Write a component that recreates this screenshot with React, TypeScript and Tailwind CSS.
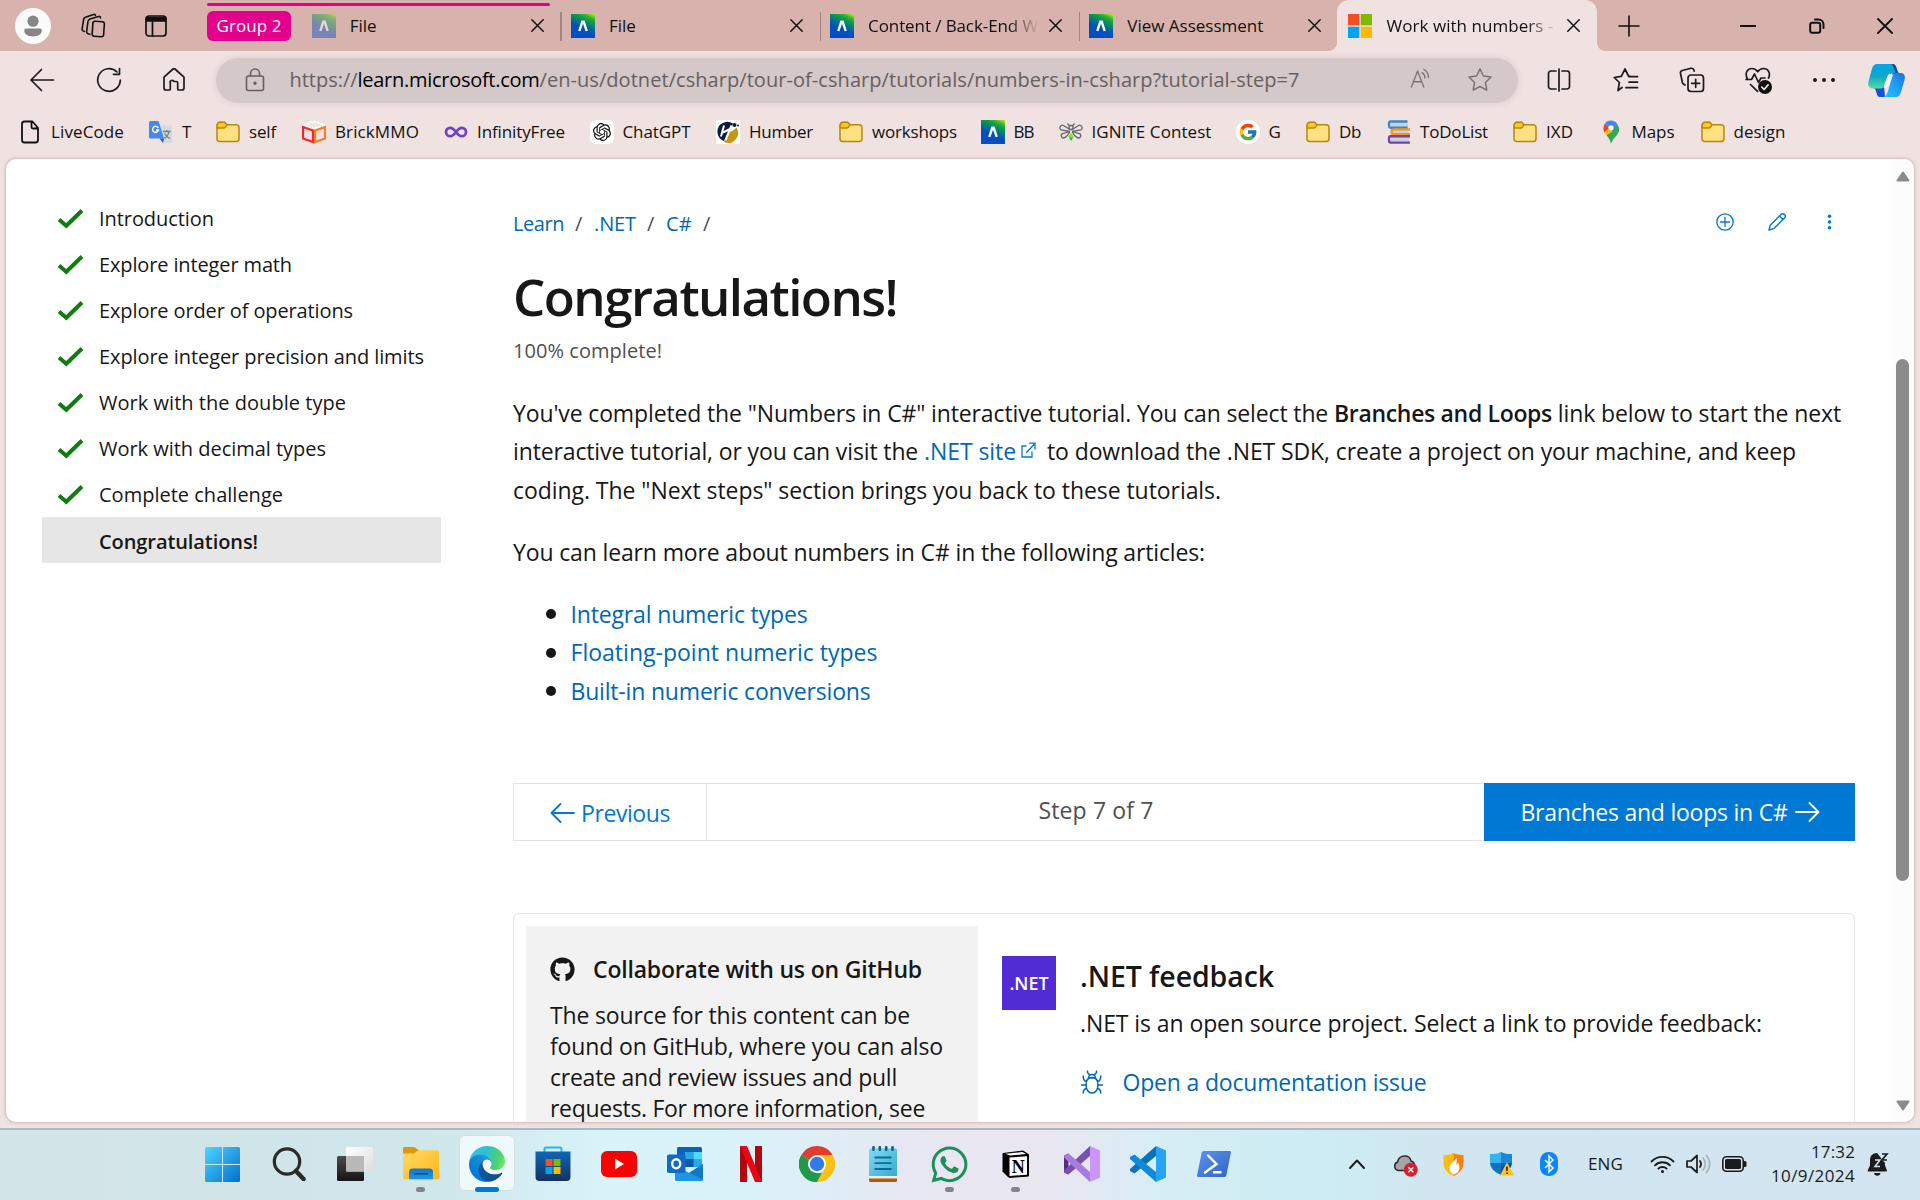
import React, { useLayoutEffect, useRef, useState } from "react";
import { FcGoogle } from "react-icons/fc";
import { FaGithub, FaWhatsapp } from "react-icons/fa";
import { SiOpenai } from "react-icons/si";

/* A run of text whose tracking is adjusted so that it spans `w` pixels. */
function T({ w, children, className = "" }: { w: number; children: string; className?: string }) {
  const ref = useRef<HTMLSpanElement>(null);
  const [ls, setLs] = useState(0);
  useLayoutEffect(() => {
    const el = ref.current;
    if (!el) return;
    el.style.letterSpacing = "0px";
    const natural = el.getBoundingClientRect().width;
    setLs((w - natural) / children.length);
    el.style.letterSpacing = `${(w - natural) / children.length}px`;
  }, [w, children]);
  return (
    <span ref={ref} className={`inline-block whitespace-pre ${className}`} style={{ letterSpacing: `${ls}px` }}>
      {children}
    </span>
  );
}

type SvgProps = { w: number; h?: number; vb?: string; className?: string; sw?: number; children: React.ReactNode };
/* Outline icon */
function Line({ w, h = w, vb, className = "", sw = 1.6, children }: SvgProps) {
  return (
    <svg width={w} height={h} viewBox={vb ?? `0 0 ${w} ${h}`} fill="none" stroke="currentColor" strokeWidth={sw} strokeLinecap="round" strokeLinejoin="round" className={`block shrink-0 ${className}`}>
      {children}
    </svg>
  );
}
/* Filled icon */
function Fill({ w, h = w, vb, className = "", children }: SvgProps) {
  return (
    <svg width={w} height={h} viewBox={vb ?? `0 0 ${w} ${h}`} className={`block shrink-0 ${className}`}>
      {children}
    </svg>
  );
}

function Close({ s = 13 }: { s?: number }) {
  return (
    <Line w={s} vb="0 0 13 13" sw={1.5}>
      <path d="M.8.8l11.4 11.4M12.2.8L.8 12.2" />
    </Line>
  );
}

function BrightspaceIcon({ faded = false }: { faded?: boolean }) {
  return (
    <div className={`flex h-6 w-6 shrink-0 items-center justify-center bg-[linear-gradient(25deg,#0050c0_42%,#0b9a4a_72%,#2fb338_84%,#d8ee10_100%)] ${faded ? "opacity-45" : ""}`}>
      <svg width="12" height="12" viewBox="0 0 12 12" fill="none" stroke="#fff" strokeWidth="2.4">
        <path d="M2.300 11L5.300 1.800h1.400l3 9.200" />
      </svg>
    </div>
  );
}

function MsLogo({ s }: { s: number }) {
  return (
    <Fill w={s} vb="0 0 24 24">
      <path fill="#f25022" d="M0 0h11.3v11.3H0z" />
      <path fill="#7fba00" d="M12.7 0H24v11.3H12.7z" />
      <path fill="#00a4ef" d="M0 12.7h11.3V24H0z" />
      <path fill="#ffb900" d="M12.7 12.7H24V24H12.7z" />
    </Fill>
  );
}

function Tab({ label, w, active = false, faded = false, fade = false, sep = false }: { label: string; w: number; active?: boolean; faded?: boolean; fade?: boolean; sep?: boolean }) {
  return (
    <div className={`relative flex h-full w-[259.2px] shrink-0 items-center pl-[11px] ${active ? "rounded-t-[12px] bg-[#f0e2e1]" : ""}`}>
      {active ? <MsLogo s={24} /> : <BrightspaceIcon faded={faded} />}
      <div className={`ml-[14px] w-[171px] overflow-hidden ${fade ? "[mask-image:linear-gradient(to_right,#000_82%,transparent_100%)]" : ""}`}>
        <T w={w}>{label}</T>
      </div>
      <div className="ml-[10px]">
        <Close />
      </div>
      {sep && <div className="absolute top-[12px] right-[-2px] h-[29px] w-[1.5px] bg-[#a08581]" />}
      {active && (
        <>
          <div className="absolute bottom-0 -left-2 h-2 w-2 bg-[radial-gradient(circle_at_0_0,transparent_7.5px,#f0e2e1_8px)]" />
          <div className="absolute -right-2 bottom-0 h-2 w-2 bg-[radial-gradient(circle_at_100%_0,transparent_7.5px,#f0e2e1_8px)]" />
        </>
      )}
    </div>
  );
}

function TabStrip() {
  return (
    <div className="relative flex h-[51px] items-center bg-[#d8b2ac] text-[17px] text-[#111]">
      <div className="ml-[15px] w-9">
        <Fill w={36}>
          <circle cx="18" cy="18" r="18" fill="#fafafa" />
          <circle cx="18" cy="13.2" r="5.6" fill="#868686" />
          <path d="M11.2 20.6h13.6a2 2 0 0 1 2 2.2c-.4 4-3.8 5.7-8.8 5.7s-8.4-1.700-8.800-5.700a2 2 0 0 1 2-2.200z" fill="#868686" />
        </Fill>
      </div>
      <div className="ml-[29px] w-[26px]">
        <Line w={26} h={26} sw={1.6}>
          <rect x="12.500" y="8.500" width="11.500" height="15" rx="2.200" transform="rotate(4 18 16)" />
          <path d="M9.800 21.300l-1.800-.5A2 2 0 0 1 6.600 18.700L8 8.300a3 3 0 0 1 2-2.400l8.500-2.400a1.500 1.500 0 0 1 2 1.500" />
          <path d="M4.300 18.500l-1.200-.6a2 2 0 0 1-1-2.100L3.600 6.600a3 3 0 0 1 1.900-2.300L13.500 1.500a1.500 1.500 0 0 1 1.900.8" />
        </Line>
      </div>
      <div className="ml-[39px]">
        <Line w={22} h={22} sw={1.7}>
          <rect x="1" y="1" width="20" height="20" rx="3" />
          <path d="M1.500 2.500h19V6h-19z" fill="currentColor" />
          <path d="M7.500 7v14" />
        </Line>
      </div>
      <div className="ml-[40px] flex h-[30px] w-[84px] items-center justify-center rounded-[6px] bg-[#e3008c] text-white">
        <T w={65}>Group 2</T>
      </div>
      <div className="ml-[9.700px] flex h-full">
        <Tab label="File" w={27} faded sep />
        <Tab label="File" w={27} sep />
        <Tab label="Content / Back-End W" w={170} fade sep />
        <Tab label="View Assessment" w={136} />
        <Tab label="Work with numbers -" w={167} active fade />
      </div>
      <div className="ml-[21px] flex-1">
        <Line w={22}>
          <path d="M11 1v20M1 11h20" />
        </Line>
      </div>
      <div className="flex items-center">
        <div className="flex w-[70px] justify-center">
          <Line w={16} sw={2}><path d="M.8 8h14.400" /></Line>
        </div>
        <div className="flex w-[68px] justify-center">
          <Line w={16} sw={2}>
            <rect x="1.200" y="4.800" width="10" height="10" rx="2" />
            <path d="M6 1.500h3.500a5 5 0 0 1 5 5V10" />
          </Line>
        </div>
        <div className="mr-[2px] flex w-[67px] justify-center"><Close s={16} /></div>
      </div>
      <div className="absolute top-[3px] left-[207px] h-[3px] w-[343px] rounded-full bg-[#e3008c]" />
    </div>
  );
}

const starPath = "M12 1.800l3.100 6.500 7.100 1-5.200 5 1.300 7.100L12 18l-6.300 3.400L7 14.300l-5.200-5 7.100-1z";

function Toolbar() {
  return (
    <div className="flex h-[58px] items-center pl-[9px] text-[#1b1b1b]">
      <div className="flex">
        <div className="flex w-[66px] justify-center"><Line w={26} sw={1.700}><path d="M24.500 13H2M12.500 2.500L2 13l10.500 10.500" /></Line></div>
        <div className="flex w-[67px] justify-center"><Line w={26} sw={1.700}><path d="M24.300 13A11.300 11.300 0 1 1 21 5M23.500 1.500v5.800h-6" /></Line></div>
        <div className="flex w-[64px] justify-center"><Line w={24} sw={1.700}><path d="M2 10.200L11 2a1.500 1.500 0 0 1 2 0l9 8.200V21a2 2 0 0 1-2 2h-3.300a1 1 0 0 1-1-1v-6a1.500 1.500 0 0 0-1.500-1.500h-2.400A1.500 1.500 0 0 0 8.300 16v6a1 1 0 0 1-1 1H4a2 2 0 0 1-2-2z" /></Line></div>
      </div>
      <div className="ml-[10px] flex h-[45px] w-[1302px] items-center rounded-full bg-[#d5c8c8] pl-[29px] text-[20px] text-[#666060] shadow-[0_0_7px_rgba(80,40,40,0.12)]">
        <Line w={20} h={24} sw={1.600}>
          <rect x="1.500" y="8" width="17" height="14.500" rx="2" />
          <path d="M5.500 8V5.500a4.500 4.500 0 0 1 9 0V8" />
          <circle cx="10" cy="15.300" r=".9" fill="currentColor" />
        </Line>
        <div className="ml-[24.500px] flex flex-1 pb-px">
          <T w={68}>https://</T>
          <T w={182} className="text-black">learn.microsoft.com</T>
          <T w={760}>/en-us/dotnet/csharp/tour-of-csharp/tutorials/numbers-in-csharp?tutorial-step=7</T>
        </div>
        <div className="flex items-center gap-[34px] pr-[25px] text-[#7b7474]">
          <Line w={25} h={24} className="pb-1">
            <path d="M1.500 23L9 3.500 16.500 23M4.200 16.500h9.600M14.500 5.500a7.500 7.500 0 0 1 3.300 6.500M16.500 1.500a11.500 11.500 0 0 1 5.500 10" />
          </Line>
          <Line w={26} vb="0 0 24 24" sw={1.400}><path d={starPath} /></Line>
        </div>
      </div>
      <div className="ml-[8px] flex items-center">
        <div className="flex w-[66px] justify-center">
          <Line w={24} sw={1.700}><path d="M9 3H4a2.500 2.500 0 0 0-2.500 2.500v13A2.500 2.500 0 0 0 4 21h5M15 3h5a2.500 2.500 0 0 1 2.500 2.500v13A2.500 2.500 0 0 1 20 21h-5M12 1v22" /></Line>
        </div>
        <div className="flex w-[67px] justify-center">
          <Line w={26} sw={1.700}><path d="M9 20.500l-4 3 1.400-8-5.200-5 7.100-1.200L12 2l3.500 7 3 .5M16 9.700h8.500M16 15.200h8.500M13 20.700h11.500" /></Line>
        </div>
        <div className="flex w-[66px] justify-center">
          <Line w={26} sw={1.700}>
            <rect x="9" y="8" width="15.500" height="16.500" rx="3" />
            <path d="M16.700 12.300v8M12.700 16.300h8M6 18l-1.500-1a3 3 0 0 1-1.200-1.900L1.500 6.500A2.500 2.500 0 0 1 3.300 3.500L12 1.300a2.500 2.500 0 0 1 3 1.900l.2 1" />
          </Line>
        </div>
        <div className="flex w-[67px] justify-center">
          <Line w={28} h={27} sw={1.700}>
            <path d="M2.500 12C-1 5.500 3 1.500 7 1.500c3 0 4.800 1.800 5.700 3.200 1-1.400 2.800-3.200 5.800-3.200 4.500 0 7.500 4.500 5 9.500M1 12.500h5.500L9.500 7l4 8.500 2.500-4.500h4M5.500 17.500l7 6.800" />
            <circle cx="20" cy="20" r="7" fill="#111" stroke="none" />
            <path d="M16.800 20.200l2.300 2.300 4-4.600" stroke="#f0e2e1" />
          </Line>
        </div>
        <div className="flex w-[64px] justify-center gap-[5px]">
          <i className="size-[4px] rounded-full bg-[#1b1b1b]" />
          <i className="size-[4px] rounded-full bg-[#1b1b1b]" />
          <i className="size-[4px] rounded-full bg-[#1b1b1b]" />
        </div>
        <div className="flex w-[61px] justify-center">
          <Fill w={37} h={33} vb="0 0 37 33">
            <defs>
              <linearGradient id="cpA" x1="0" y1="0" x2="0" y2="1"><stop offset="0" stopColor="#05a5ea" /><stop offset=".5" stopColor="#0fa7c8" /><stop offset="1" stopColor="#55dd9a" /></linearGradient>
              <linearGradient id="cpB" x1="1" y1="0" x2="0" y2="1"><stop offset="0" stopColor="#1f6fd8" /><stop offset=".5" stopColor="#1ba2f5" /><stop offset="1" stopColor="#1fc5ff" /></linearGradient>
            </defs>
            <path d="M20 0h5c4 0 3.500 7 6 9.500L22 11z" fill="#0a4aa8" />
            <path d="M17 33h-5c-4 0-3-7-6-9l10-2z" fill="#1652d6" />
            <path d="M9 0h13c2.500 0 3.300 2 4 4.500L27.500 9H24c-3 0-4 1.500-5 4.500l-3 8.500c-.6 2-2 2.500-4 2.500H5c-4 0-5.500-3-4.500-7l3.500-13C5 1.500 6.500 0 9 0z" fill="url(#cpA)" />
            <path d="M28 33H15c3 0 4-3 5-6l4-13c1-3.500 2-5 5-5h3.500c4 0 5 3 4 7L33 28c-1 3.500-2.500 5-5 5z" fill="url(#cpB)" />
            <path d="M24 9.500c-3 0-4 1.500-5 4.500l-3.500 10h1.500c2 0 3-1 3.500-3l3-9c.4-1.300 1-2.500 2.500-2.500z" fill="#f4fbff" />
          </Fill>
        </div>
      </div>
    </div>
  );
}

function Folder() {
  return (
    <Fill w={24} h={22}>
      <path d="M1 5.500C1 2.500 2 1.200 4 1.200h4.500l2.500 2.600h9.300A2.700 2.700 0 0 1 23 6.500v11.300a2.700 2.700 0 0 1-2.700 2.700H3.700A2.700 2.700 0 0 1 1 17.800z" fill="#ffe082" stroke="#b8860b" strokeWidth="1.500" />
      <path d="M1.200 6V4.500A3 3 0 0 1 4 1.300h4.500L11 3.900 9.500 6c-.5.700-1 1-2 1H1.300z" fill="#ffc720" stroke="#b8860b" strokeWidth="1.300" />
    </Fill>
  );
}

const bookmarkIcons: Record<string, React.ReactNode> = {
  page: (
    <Line w={24} sw={1.800}>
      <path d="M6 1.500h8.500L20 8v12a2.500 2.500 0 0 1-2.500 2.500h-11A2.500 2.500 0 0 1 4 20V4a2.500 2.500 0 0 1 2-2.500zM13.500 2v5A1.500 1.500 0 0 0 15 8.500h5" />
    </Line>
  ),
  translate: (
    <Fill w={24}>
      <path d="M9 5.500h12.500A1.500 1.500 0 0 1 23 7v14.500a1.500 1.500 0 0 1-1.500 1.500H14z" fill="#d3dbdc" />
      <path d="M1.500 1h8L15 18.500H1.500A1.500 1.500 0 0 1 0 17V2.500A1.500 1.500 0 0 1 1.500 1z" fill="#4688f1" />
      <path d="M10.500 18.500H15L14 23z" fill="#2f55ad" />
      <path d="M9.300 8A3 3 0 1 0 9.500 10H7" fill="none" stroke="#fff" strokeWidth="1.400" />
      <path d="M14 11.500h7.500M17.700 10v1.500M20 11.500c-.5 3-2.500 5.500-5 7M15.500 13.500c1 2 3 4 5.500 5" fill="none" stroke="#6b7f86" strokeWidth="1.300" />
    </Fill>
  ),
  folder: <Folder />,
  brick: (
    <Fill w={24}>
      <g fill="none" strokeWidth="2.200">
        <path d="M1 7l10 3.500V22L1 18.500z" stroke="#f5232f" />
        <path d="M23 7l-10 3.500V22l10-3.500z" stroke="#ff7a1a" />
        <path d="M2 5l10-3.500L22 5l-10 3.500z" stroke="#fff" strokeDasharray="2.500 1" strokeWidth="1.800" />
      </g>
    </Fill>
  ),
  infinity: (
    <Fill w={24}>
      <path d="M12 12C9.500 8.500 8 7.800 6.200 7.800a4.200 4.200 0 0 0 0 8.400C8 16.200 9.500 15.500 12 12s4-4.200 5.800-4.200a4.200 4.200 0 0 1 0 8.400c-1.800 0-3.300-.7-5.800-4.200z" fill="none" stroke="#7140c4" strokeWidth="2.700" />
    </Fill>
  ),
  gpt: (
    <div className="flex size-6 items-center justify-center rounded-[6px] bg-white"><SiOpenai size={18} color="#111" /></div>
  ),
  humber: (
    <Fill w={24}>
      <path fill="#fff" d="M0 0h24v24H0z" />
      <path d="M1.500 13A10 10 0 0 1 17 3.500L8 21A10 10 0 0 1 1.500 13z" fill="#0c1c3c" />
      <path d="M20.500 7.500a10 10 0 0 1-12.500 14.500L12.500 12l4-1z" fill="#c9950f" />
      <path d="M8 5.500L5 16.500M9.500 20L15.500 5.500M7 12.500l7-3.500" stroke="#fff" strokeWidth="2" />
      <circle cx="18.500" cy="5" r="2" fill="#0c1c3c" /><circle cx="22" cy="5.500" r="1" fill="#0c1c3c" />
    </Fill>
  ),
  bb: <BrightspaceIcon />,
  bee: (
    <Fill w={24}>
      <g fill="none" stroke="#63676b" strokeWidth="1.300">
        <path d="M11.500 10L4.500 5.500a2.500 2.500 0 0 0-2.500 4.300L11 11.500M12.500 10l7-4.500a2.500 2.500 0 0 1 2.500 4.300L13 11.500" />
        <path d="M10.500 11.500l-6.800 2.200a2.200 2.200 0 0 0 1.600 4.100c2-.8 4-3 5.500-6M13.500 11.500l6.800 2.200a2.200 2.200 0 0 1-1.600 4.100c-2-.8-4-3-5.500-6" />
        <circle cx="12" cy="7.500" r="2" />
        <path d="M10.500 6L8.500 3.500M13.500 6l2-2.500" />
      </g>
      <path d="M12 13l2.800 3.500L12 21l-2.800-4.500z" fill="#8ee02a" />
      <path d="M10 17.500h4L12 21z" fill="#25b97a" />
    </Fill>
  ),
  google: <div className="flex size-6 items-center justify-center rounded-full bg-white"><FcGoogle size={20} /></div>,
  books: (
    <Fill w={24}>
      <path fill="#c3d2dc" d="M4 2.500h17V8H4zM4 10h17v4.500H4zM4 17h18v5H4z" />
      <path d="M20.500 1.500H3.500c-2 0-2 6.200 0 6.200h17" fill="none" stroke="#3c86c8" strokeWidth="2.400" />
      <path d="M23 9.300H6.500c-2.500 0-2.500 4.800 0 4.800H23" fill="none" stroke="#ff9010" strokeWidth="2.300" />
      <path d="M23 16.300H3.500c-2 0-2 6.300 0 6.300H23" fill="none" stroke="#7540a8" strokeWidth="2.400" />
    </Fill>
  ),
  maps: (
    <Fill w={24}>
      <path d="M12 23.800c-1-4.300-2.500-6-4.500-8.600L18.500 4.800c3 4 1.500 7.700-.5 10-2 2.700-4.700 5-6 9z" fill="#34a853" />
      <path d="M5.200 11.500L10 6l3.500 5.500-6 3.700c-1.200-1.500-2-2.500-2.300-3.700z" fill="#fbbc04" />
      <path d="M6 3.500l4.500 4-5.300 5C4 9 4.200 6 6 3.500z" fill="#ea4335" />
      <path d="M6 3.500C8-.2 15.500-1.300 18.700 4.700L14 10l-5-4z" fill="#4285f4" />
      <circle cx="12" cy="7.800" r="2.600" fill="#fff" />
    </Fill>
  ),
};

const bookmarks: [string, string, number, number][] = [
  ["page", "LiveCode", 73, 131],
  ["translate", "T", 9, 67],
  ["folder", "self", 27, 86],
  ["brick", "BrickMMO", 84, 142],
  ["infinity", "InfinityFree", 88, 145.500],
  ["gpt", "ChatGPT", 68, 126.500],
  ["humber", "Humber", 64, 123],
  ["folder", "workshops", 85, 141.500],
  ["bb", "BB", 20, 78],
  ["bee", "IGNITE Contest", 120, 177],
  ["google", "G", 12, 70.500],
  ["folder", "Db", 22, 81],
  ["books", "ToDoList", 68, 126],
  ["folder", "IXD", 27, 85.500],
  ["maps", "Maps", 43, 102],
  ["folder", "design", 52, 90],
];

function Bookmarks() {
  return (
    <div className="flex h-[49px] pb-[4px] pl-[18px] text-[17px] text-[#111]">
      {bookmarks.map(([icon, label, w, cell]) => (
        <div key={label} className="flex shrink-0 items-center gap-[9px]" style={{ width: cell }}>
          <div className="w-6 shrink-0">{bookmarkIcons[icon]}</div>
          <T w={w}>{label}</T>
        </div>
      ))}
    </div>
  );
}

const steps: [string, number][] = [
  ["Introduction", 115],
  ["Explore integer math", 193],
  ["Explore order of operations", 254],
  ["Explore integer precision and limits", 325],
  ["Work with the double type", 247],
  ["Work with decimal types", 227],
  ["Complete challenge", 184],
];

function Steps() {
  return (
    <nav className="mt-[36px] ml-[36px] w-[399px] shrink-0 text-[20px] text-[#171717]">
      {steps.map(([label, w]) => (
        <div key={label} className="flex h-[46px] items-center pt-[2px] pl-[15px]">
          <Line w={27} h={20} sw={4} className="mr-[15px] text-[#107c10]">
            <path strokeLinecap="butt" strokeLinejoin="miter" d="M2 10.500l7.300 6.300L25 1.500" />
          </Line>
          <T w={w}>{label}</T>
        </div>
      ))}
      <div className="flex h-[46px] items-center bg-[#e6e6e6] pt-[3px] pl-[57px] font-semibold">
        <T w={159}>Congratulations!</T>
      </div>
    </nav>
  );
}

function Article() {
  return (
    <main className="ml-[72px] flex w-[1342px] shrink-0 flex-col pt-[50px] text-[23px] leading-[38.4px] text-[#171717]">
      <div className="flex h-[30px] shrink-0 justify-between">
        <div className="flex text-[20px] leading-[30px] text-[#505050]">
          <T w={51} className="text-[#0067b8]">Learn</T>
          <T w={8} className="mx-[11px]">/</T>
          <T w={42} className="text-[#0067b8]">.NET</T>
          <T w={8} className="mx-[11px]">/</T>
          <T w={26} className="text-[#0067b8]">C#</T>
          <T w={8} className="mx-[11px]">/</T>
        </div>
        <div className="mr-[16px] flex h-[26px] items-center gap-[34px] text-[#0078d4]">
          <Line w={18} sw={1.300}><circle cx="9" cy="9" r="8.200" /><path d="M9 4.500v9M4.500 9h9" /></Line>
          <Line w={18} sw={1.400}><path d="M1 17l1.200-4.800L13 1.500a2.400 2.400 0 0 1 3.500 3.400L5.700 15.700zM11.500 3l3.500 3.500" /></Line>
          <Fill w={5} h={16} className="mx-[7px]"><g fill="#0078d4"><circle cx="2.500" cy="2.200" r="1.800" /><circle cx="2.500" cy="8" r="1.800" /><circle cx="2.500" cy="13.800" r="1.800" /></g></Fill>
        </div>
      </div>
      <h1 className="mt-[25px] h-[64px] shrink-0 text-[51px] leading-[64px] font-semibold"><T w={384}>Congratulations!</T></h1>
      <div className="mt-[8px] h-[30px] shrink-0 text-[20px] leading-[30px] text-[#505050]"><T w={149}>100% complete!</T></div>
      <div className="mt-[28px] shrink-0">
        <div className="flex">
          <T w={821}>{'You\'ve completed the "Numbers in C#" interactive tutorial. You can select the '}</T>
          <T w={218} className="font-semibold">Branches and Loops</T>
          <T w={289}> link below to start the next</T>
        </div>
        <div className="flex">
          <T w={411}>interactive tutorial, or you can visit the </T>
          <T w={92} className="text-[#0067b8]">.NET site</T>
          <Line w={15} h={16} sw={1.300} className="mt-[10px] mr-[11px] ml-[5px] text-[#0078d4]">
            <path d="M5 4H1v11h10v-5M5.500 10.500L13.500 2M8.500 1.200H14V7" strokeLinejoin="miter" />
          </Line>
          <T w={749}>to download the .NET SDK, create a project on your machine, and keep</T>
        </div>
        <T w={708}>coding. The "Next steps" section brings you back to these tutorials.</T>
      </div>
      <div className="mt-[24px] h-[38.4px] shrink-0"><T w={692}>You can learn more about numbers in C# in the following articles:</T></div>
      <ul className="mt-[23px] h-[116px] shrink-0 leading-[38.7px] text-[#0067b8]">
        {([["Integral numeric types", 237], ["Floating-point numeric types", 307], ["Built-in numeric conversions", 300]] as [string, number][]).map(([t, w]) => (
          <li key={t} className="flex items-center pl-[32.500px]">
            <i className="mr-[15px] size-[10px] rounded-full bg-[#171717]" />
            <T w={w}>{t}</T>
          </li>
        ))}
      </ul>
      <div className="mt-[72px] flex h-[58px] shrink-0 items-stretch border border-r-0 border-[#e3e3e3]">
        <div className="flex w-[193px] border-r border-[#e3e3e3] pt-[10px] pl-[36px] text-[#0078d4]">
          <Line w={25} h={20} sw={1.800} className="mt-[9px] mr-[6px]"><path d="M24 10H1.500M10.500 1L1.500 10l9 9" /></Line>
          <T w={89}>Previous</T>
        </div>
        <div className="flex flex-1 justify-center pt-[7px] pl-px text-[#505050]"><T w={115}>Step 7 of 7</T></div>
        <div className="-my-px flex w-[371px] bg-[#0078d4] pt-[10px] pl-[36.500px] text-white">
          <T w={267}>Branches and loops in C#</T>
          <Line w={25} h={20} sw={1.800} className="mt-[9px] ml-[7px]"><path d="M1 10h22.500M14.500 1l9 9-9 9" /></Line>
        </div>
      </div>
      <div className="mt-[72px] flex h-[300px] shrink-0 rounded-[6px] border border-[#e3e3e3] pt-[12px] pl-[12px]">
        <div className="w-[452px] bg-[#f2f2f2] pt-[28px] pl-[24px] leading-[31.2px]">
          <div className="flex h-[32px] items-center font-semibold">
            <FaGithub size={25} className="mr-[18px]" />
            <T w={329}>Collaborate with us on GitHub</T>
          </div>
          <div className="mt-[14px]">
            <T w={360}>The source for this content can be</T>
            <T w={393}>found on GitHub, where you can also</T>
            <T w={347}>create and review issues and pull</T>
            <T w={375}>requests. For more information, see</T>
          </div>
        </div>
        <div className="mt-[30px] ml-[24px] flex size-[54px] items-center justify-center bg-[#512bd4] text-[18px] text-white">
          <T w={39} className="pt-[1px] font-semibold">.NET</T>
        </div>
        <div className="mt-[30px] ml-[24px]">
          <div className="h-[40px] text-[28.5px] leading-[40px] font-semibold"><T w={194}>.NET feedback</T></div>
          <div className="mt-[8px] h-[38px]"><T w={682}>.NET is an open source project. Select a link to provide feedback:</T></div>
          <div className="mt-[21px] flex items-center text-[#0067b8]">
            <Line w={24} sw={1.500} className="mr-[18.500px]">
              <path d="M12 7.500c-4 0-6 3-6 7.500s2.500 8 6 8 6-3.500 6-8-2-7.500-6-7.500zM8.500 8a3.500 3.500 0 0 1 7 0zM7.500 1v1.500l2.200 2.500M16.500 1v1.500L14.300 5M6.500 11.500C4 11 3.200 9.500 3.200 6M17.500 11.500c2.500-.5 3.300-2 3.300-5.500M6 15H1.500M18 15h4.500M6.500 18.500c-2.500.5-3.300 1.500-3.300 4.500M17.500 18.500c2.500.5 3.300 1.500 3.300 4.500" />
            </Line>
            <T w={304}>Open a documentation issue</T>
          </div>
        </div>
      </div>
    </main>
  );
}

function Scrollbar() {
  return (
    <div className="flex w-[22px] shrink-0 flex-col items-center bg-[#fcfcfc]">
      <Fill w={14} h={11} className="mt-[12px] mr-px"><path d="M7 1.500L12.500 9.500h-11z" fill="#8a8a8a" stroke="#8a8a8a" strokeWidth="2" strokeLinejoin="round" /></Fill>
      <div className="mt-[177px] mr-[2px] h-[522px] w-[13px] rounded-full bg-[#8b8b8b]" />
      <div className="flex-1" />
      <Fill w={14} h={11} className="mr-px mb-[11px]"><path d="M7 9.500L12.500 1.500h-11z" fill="#8a8a8a" stroke="#8a8a8a" strokeWidth="2" strokeLinejoin="round" /></Fill>
    </div>
  );
}

const taskIcons: React.ReactNode[] = [
  <Fill w={35}>
    <defs><linearGradient id="win" x1="0" y1="0" x2="1" y2="1"><stop offset="0" stopColor="#4fd6ff" /><stop offset="1" stopColor="#006fd0" /></linearGradient></defs>
    <path fill="url(#win)" d="M1.500 0H17v17H0V1.500A1.500 1.500 0 0 1 1.500 0zM18 0h15.500A1.500 1.500 0 0 1 35 1.500V17H18zM0 18h17v17H1.500A1.500 1.500 0 0 1 0 33.500zM18 18h17v15.500a1.500 1.500 0 0 1-1.500 1.500H18z" />
  </Fill>,
  <Line w={34} sw={3.200} className="text-[#2b2b2b]"><circle cx="15" cy="14.500" r="12.700" /><path d="M24 24l7.500 8" strokeWidth="4.500" /></Line>,
  <Fill w={36} h={34}>
    <defs>
      <linearGradient id="tv1" x1="0" y1="0" x2="0" y2="1"><stop offset="0" stopColor="#4a4a4a" /><stop offset="1" stopColor="#151515" /></linearGradient>
      <linearGradient id="tv2" x1="0" y1="0" x2="1" y2="1"><stop offset="0" stopColor="#fff" /><stop offset="1" stopColor="#ddd" /></linearGradient>
    </defs>
    <rect x="0" y="9" width="27" height="25" rx="1.500" fill="url(#tv1)" />
    <rect x="9" y="0" width="27" height="24.500" rx="1.500" fill="url(#tv2)" />
    <path d="M9 9h18v15.500H9z" fill="#b9b9b9" />
  </Fill>,
  <Fill w={36} h={34}>
    <defs>
      <linearGradient id="fe" x1="0" y1="0" x2="1" y2="1"><stop offset="0" stopColor="#ffd968" /><stop offset="1" stopColor="#fdb813" /></linearGradient>
      <linearGradient id="fe2" x1="0" y1="0" x2="0" y2="1"><stop offset="0" stopColor="#1175c8" /><stop offset="1" stopColor="#2597e8" /></linearGradient>
    </defs>
    <path d="M0 1.500A1.500 1.500 0 0 1 1.500 0h9c3 0 3 3 5.500 3v6H0z" fill="#dc9a08" />
    <path d="M0 6.500h10c3 0 3.500-3.200 6.500-3.200h18A1.500 1.500 0 0 1 36 4.800v26a1.500 1.500 0 0 1-1.500 1.500h-33A1.500 1.500 0 0 1 0 30.800z" fill="url(#fe)" />
    <path d="M6 32.300V25a3.500 3.500 0 0 1 3.500-3.500h17A3.500 3.500 0 0 1 30 25v7.300z" fill="url(#fe2)" />
    <path d="M11 26.800h14" stroke="#0b4f96" strokeWidth="1.600" />
  </Fill>,
  <Fill w={36} vb="0 0 256 256">
    <defs>
      <linearGradient id="e1" x1="63" y1="177" x2="241" y2="177" gradientUnits="userSpaceOnUse"><stop offset="0" stopColor="#0c59a4" /><stop offset="1" stopColor="#114a8b" /></linearGradient>
      <linearGradient id="e2" x1="157" y1="100" x2="46" y2="221" gradientUnits="userSpaceOnUse"><stop offset="0" stopColor="#1b9de2" /><stop offset=".4" stopColor="#1389d5" /><stop offset="1" stopColor="#0078d7" /></linearGradient>
      <linearGradient id="e3" x1="0" y1="60" x2="250" y2="130" gradientUnits="userSpaceOnUse"><stop offset="0" stopColor="#35c1f1" /><stop offset=".45" stopColor="#2cc2c8" /><stop offset=".8" stopColor="#50d070" /><stop offset="1" stopColor="#66eb6e" /></linearGradient>
    </defs>
    <path fill="url(#e1)" d="M231.100 190.500c-3.400 1.800-6.900 3.400-10.500 4.700-11.500 4.300-23.600 6.500-35.900 6.500-47.300 0-88.500-32.500-88.500-74.300.1-11.400 6.400-21.900 16.400-27.300-42.800 1.800-53.800 46.400-53.800 72.500 0 73.900 68.100 81.400 82.800 81.400 7.900 0 19.800-2.300 27-4.600l1.300-.4c27.600-9.500 51-28.100 66.600-52.800 1.200-1.900.6-4.300-1.200-5.500-1.300-.8-2.900-.9-4.200-.2z" />
    <path fill="url(#e2)" d="M105.700 241.400c-8.900-5.500-16.600-12.800-22.700-21.300-26.300-36-18.400-86.500 17.600-112.800 3.800-2.700 7.700-5.200 11.900-7.200 3.100-1.500 8.400-4.100 15.500-4 10.100.1 19.600 4.900 25.700 13 4 5.400 6.300 11.900 6.400 18.700 0-.2 24.500-79.600-80-79.600-43.900 0-80 41.700-80 78.200-.2 19.300 4 38.500 12.100 56 27.600 58.800 94.800 87.600 156.400 67.100-21.100 6.600-44.100 3.700-62.900-8.100z" />
    <path fill="url(#e3)" d="M152.300 148.900c-.8 1-3.300 2.500-3.300 5.700 0 2.600 1.700 5.100 4.700 7.200 14.400 10 41.500 8.700 41.600 8.700 10.700 0 21.100-2.900 30.300-8.300 18.800-11 30.400-31.100 30.400-52.900.3-22.400-8-37.300-11.300-43.900C223.500 23.900 177.700 0 128 0 58 0 1 56.200 0 126.200c.5-36.500 36.800-66 80-66 3.500 0 23.500.3 42 10.100 16.300 8.600 24.900 18.900 30.800 29.200 6.200 10.700 7.300 24.100 7.300 29.500 0 5.300-2.700 13.300-7.800 19.900z" />
  </Fill>,
  <Fill w={36}>
    <defs><linearGradient id="st" x1="0" y1="0" x2="0" y2="1"><stop offset="0" stopColor="#0d68b8" /><stop offset="1" stopColor="#14315e" /></linearGradient></defs>
    <path d="M9.500 7V3A1.500 1.500 0 0 1 11 1.500h14A1.500 1.500 0 0 1 26.500 3v4" fill="none" stroke="#27b4f4" strokeWidth="2" />
    <path d="M.5 5.500h35V31a4 4 0 0 1-4 4h-27a4 4 0 0 1-4-4z" fill="url(#st)" />
    <path fill="#f25022" d="M10.500 13h7v7h-7z" /><path fill="#7fba00" d="M18.500 13h7v7h-7z" />
    <path fill="#00a4ef" d="M10.500 21h7v7h-7z" /><path fill="#ffb900" d="M18.500 21h7v7h-7z" />
  </Fill>,
  <Fill w={36} h={26}>
    <rect width="36" height="26" rx="6" fill="#f00" /><path d="M14 7.500l9 5.500-9 5.500z" fill="#fff" />
  </Fill>,
  <Fill w={36} h={34}>
    <path d="M10 1.500A1.500 1.500 0 0 1 11.500 0h22A1.500 1.500 0 0 1 35 1.500V20H10z" fill="#0a63b5" />
    <path d="M18 5h8.500v7H18z" fill="#28a8ea" /><path d="M26.500 5H35v7h-8.500z" fill="#50d9ff" />
    <path d="M10 12h16.500v8H10z" fill="#0f5aa8" /><path d="M26.500 12H35v8h-8.500z" fill="#28a8ea" />
    <path d="M8 18l14 8 14-9v15.500a1.500 1.500 0 0 1-1.500 1.500h-25A1.500 1.500 0 0 1 8 32.500z" fill="#1c96e0" />
    <path d="M22 26l14-9v15.500z" fill="#1577c4" />
    <rect y="7.500" width="18.500" height="18.500" rx="1.800" fill="#0f6cc0" />
    <ellipse cx="9.200" cy="16.700" rx="4" ry="4.500" fill="none" stroke="#fff" strokeWidth="2.400" />
  </Fill>,
  <Fill w={22} h={36}>
    <path d="M0 0h7v36H0zM15 0h7v36h-7z" fill="#b1060f" /><path d="M0 0h7l15 36h-7z" fill="#e50914" />
  </Fill>,
  <Fill w={36}>
    <path d="M18 18L2.400 9A18 18 0 0 1 33.600 9z" fill="#e33b2e" />
    <path d="M18 18v18A18 18 0 0 1 2.400 9z" fill="#22984a" />
    <path d="M18 9h15.600A18 18 0 0 1 18 36l7.800-13.500z" fill="#fdc010" />
    <path d="M2.400 9l7.800 13.500c3 4 8 6 13 4L18 36A18 18 0 0 1 2.400 9z" fill="#22984a" />
    <circle cx="18" cy="18" r="9" fill="#fff" /><circle cx="18" cy="18" r="7.200" fill="#2f7bee" />
  </Fill>,
  <Fill w={28} h={36}>
    <defs><linearGradient id="np" x1="0" y1="0" x2="1" y2="1"><stop offset="0" stopColor="#7fdcf5" /><stop offset="1" stopColor="#3aa9cf" /></linearGradient></defs>
    <path d="M0 30h28v4.500a1.500 1.500 0 0 1-1.500 1.500h-25A1.500 1.500 0 0 1 0 34.500z" fill="#b5560f" /><path d="M0 29h28v3.500H0z" fill="#eee" />
    <path d="M0 4a1.500 1.500 0 0 1 1.500-1.500h25A1.500 1.500 0 0 1 28 4v26H0z" fill="url(#np)" />
    <path d="M4.500 1.200v2.500M10.800 1.200v2.500M17.200 1.200v2.500M23.500 1.200v2.500" stroke="#0b5f86" strokeWidth="2.600" strokeLinecap="round" />
    <path d="M5.500 11.500h17M5.500 17.200h17M5.500 23h17" stroke="#0b6a96" strokeWidth="1.800" />
  </Fill>,
  <FaWhatsapp size={41} color="#1d8f58" />,
  <Fill w={28}>
    <path d="M1 3.500L21 1l5.500 3.500V26L7 27.500l-6-6z" fill="#000" stroke="#000" strokeLinejoin="round" />
    <path d="M3.500 3.800L20.500 2l3.500 2-16 1.600z" fill="#fff" />
    <path d="M7.500 7.500L25 6.300v18.400L7.500 26z" fill="#fff" />
    <text x="16.200" y="22.500" textAnchor="middle" className="font-['Liberation_Serif'] text-[18px] font-bold" fill="#000">N</text>
  </Fill>,
  <Fill w={36}>
    <path d="M0 9.500L4.500 7.500v21L0 26.500z" fill="#52307c" />
    <path d="M0 26.500l4.500 2L26 10V0L.5 24z" fill="#7a4fb0" />
    <path d="M0 9.500l4.500-2L26 26v10L.5 12z" fill="#a87be0" />
    <path d="M26 0l10 4.500v27L26 36z" fill="#cc95f8" />
  </Fill>,
  <Fill w={36}>
    <path d="M26 0v10L4.500 27.500 0 25v-2z" fill="#0a72b8" />
    <path d="M26 36V26L4.500 8.500 0 11v2z" fill="#0c8bd8" />
    <path d="M26 0l10 4.500v27L26 36z" fill="#27a5f2" />
  </Fill>,
  <Fill w={34} h={26}>
    <defs><linearGradient id="ps" x1="0" y1="0" x2="1" y2="1"><stop offset="0" stopColor="#5a92f5" /><stop offset="1" stopColor="#3465c0" /></linearGradient></defs>
    <path d="M6.500 0h26a1.500 1.500 0 0 1 1.400 1.800l-4.600 22.700A2 2 0 0 1 27.500 26H1.500A1.500 1.500 0 0 1 .1 24.200L4.700 1.500A2 2 0 0 1 6.500 0z" fill="url(#ps)" />
    <path d="M11 4.500l8.500 8.500L8 21.500M17 21.300h6.500" fill="none" stroke="#fff" strokeWidth="2.400" strokeLinecap="round" />
  </Fill>,
];

function Taskbar() {
  return (
    <div className="flex h-[72px] items-center border-t-2 border-[#a9b9bf] bg-[linear-gradient(to_right,#d3e4e7_0,#cfe6ea_22%,#d8f4f9_32%,#d8f3f9_38%,#e7e7f2_48%,#e8e6f1_55%,#d8edf4_60%,#cdedf4_68%,#d1e6f0_75%,#d3e5f0_100%)] pl-[188px] text-[#1b1b1b]">
      {taskIcons.map((icon, i) => (
        <div key={i} className="relative flex h-[64px] w-[66.1px] shrink-0 items-center justify-center pb-[2px] pl-[3px]">
          {i === 4 && <div className="absolute top-[2px] left-[6.500px] size-[56px] rounded-[6px] border border-[#cfe2e6] bg-[#eff9fb]" />}
          <div className="relative">{icon}</div>
          {i === 4 && <div className="absolute bottom-[5px] left-[22.500px] h-[5px] w-[24px] rounded-full bg-[#0078d4]" />}
          {(i === 3 || i === 11 || i === 12) && <div className="absolute bottom-[5px] left-[30px] h-[5px] w-[9px] rounded-full bg-[#80868a]" />}
        </div>
      ))}
      <div className="ml-[103.500px] flex flex-1 items-center pb-[2px]">
        <Line w={16} h={10} sw={1.900}><path d="M1 9l7-7.500L15 9" /></Line>
        <Fill w={25} h={24} className="ml-[28px] mt-[2px]">
          <path d="M5 17.500A4.500 4.500 0 0 1 4.500 9c1-4 3.500-6 7-6s6 2 6.500 5c2 .5 3.500 2 3.500 4.500s-1.500 5-4 5z" fill="#a6a6a6" stroke="#2a2a2a" strokeWidth="1.500" />
          <circle cx="17.800" cy="16.800" r="7" fill="#d51f30" /><path d="M15.300 14.300l5 5M20.300 14.300l-5 5" stroke="#fff" strokeWidth="1.600" />
        </Fill>
        <Fill w={21} h={23} className="ml-[25px]">
          <path d="M10.500 0C8 1.500 4 2 .5 2v8c0 6 4 10.500 10 13z" fill="#fdbb15" /><path d="M10.500 0c2.500 1.500 6.500 2 10 2v8c0 6-4 10.500-10 13z" fill="#f77f0c" />
          <path d="M13 4c1 3-6 6-6.500 11 0 3 2 5.500 4.500 6.500 3-1 5.500-3 5.500-7 0-2-1-4-1.500-5-1 1-1.500 2-2 2.500C13.500 9 14.500 6.500 13 4z" fill="#fff" />
        </Fill>
        <Fill w={24} h={24} className="ml-[26px]">
          <path d="M11 0C8 1.800 4 2 0 2v9h11z" fill="#31b4f0" /><path d="M11 0c3 1.800 7 2 11 2v9H11z" fill="#1787d8" />
          <path d="M0 11h11v12C4.500 20 .5 16.500 0 11z" fill="#1272c0" /><path d="M11 11h11c-.5 5.500-4.500 9-11 12z" fill="#0b5299" />
          <path d="M17 10l7 13.500H10z" fill="#fdc21b" /><path d="M17 14.500v4.500M17 20.500v1.500" stroke="#222" strokeWidth="1.600" />
        </Fill>
        <Fill w={18} h={24} className="ml-[26px]">
          <rect width="18" height="24" rx="8.500" fill="#0a84ff" /><path d="M5 8l8 8-4 4V4l4 4-8 8" fill="none" stroke="#fff" strokeWidth="1.500" />
        </Fill>
        <T w={35} className="ml-[30px] text-[17px]">ENG</T>
        <Line w={25} h={19} sw={1.800} className="ml-[27px]">
          <path d="M1.500 6.500a15.500 15.500 0 0 1 22 0M5 10.300a10.700 10.700 0 0 1 15 0M8.300 13.700a6 6 0 0 1 8.400 0" /><circle cx="12.500" cy="16.500" r="1.500" fill="currentColor" stroke="none" />
        </Line>
        <Line w={26} h={22} sw={1.700} className="ml-[11px]">
          <path d="M1 8h4l6-5.500v17L5 14H1zM14 8a5 5 0 0 1 0 6" /><path d="M17 5a9 9 0 0 1 0 12M20.500 2.500a13 13 0 0 1 0 17" stroke="#a7b5bd" />
        </Line>
        <Fill w={25} h={16} className="ml-[10px]">
          <rect x=".8" y=".8" width="20.400" height="14.400" rx="3.500" fill="none" stroke="#1b1b1b" strokeWidth="1.600" /><rect x="3" y="3" width="16" height="10" rx="1.500" fill="#1b1b1b" /><path d="M22 5h1a1.500 1.500 0 0 1 1.500 1.500v3A1.500 1.500 0 0 1 23 11h-1z" fill="#1b1b1b" />
        </Fill>
        <div className="ml-[24px] flex w-[84px] flex-col items-end text-[17px] leading-[24px]">
          <T w={44}>17:32</T>
          <T w={84}>10/9/2024</T>
        </div>
        <Fill w={24} h={24} className="ml-[12px]">
          <path d="M10 1C5.500 1 3 4 3 8v5.500L.8 18v1.500h19V18L18 13.500V11z" fill="#1b1b1b" /><path d="M7 21h6.500a3.300 3.300 0 0 1-6.500 0z" fill="#1b1b1b" />
          <path d="M8 8h5l-5 6.500h5" fill="none" stroke="#d3e5f0" strokeWidth="1.500" />
          <path d="M13 0h9v9h-7z" fill="#d3e5f0" /><path d="M15 2h5l-5 6h5" fill="none" stroke="#1b1b1b" strokeWidth="1.700" />
        </Fill>
      </div>
    </div>
  );
}

export default function App() {
  return (
    <div className="flex h-[1200px] w-[1920px] flex-col overflow-hidden bg-[#f0e2e1] font-['Open_Sans','Noto_Sans',sans-serif]">
      <TabStrip />
      <Toolbar />
      <Bookmarks />
      <div className="mx-[6px] mt-[1px] mb-[6px] flex h-[963px] overflow-hidden rounded-[10px] bg-white shadow-[0_0_3px_1px_rgba(150,110,110,0.35)]">
        <Steps />
        <Article />
        <div className="flex-1" />
        <Scrollbar />
      </div>
      <Taskbar />
    </div>
  );
}
